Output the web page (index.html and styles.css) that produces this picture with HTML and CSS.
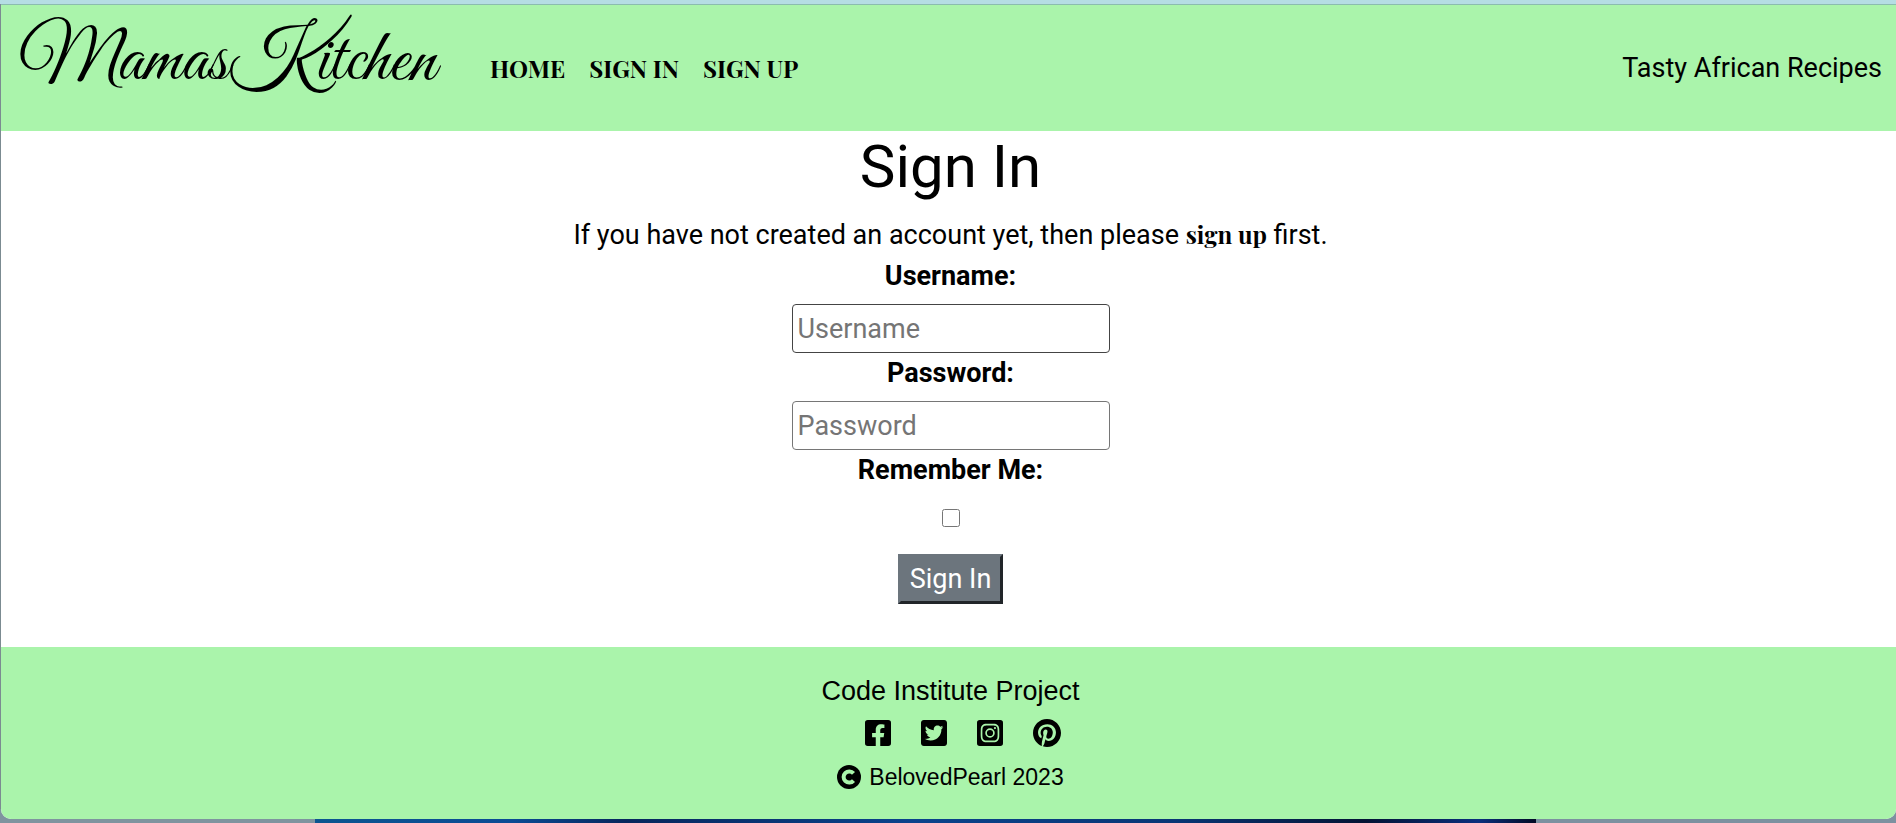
FILE: index.html
```html
<!DOCTYPE html>
<html lang="en">
<head>
<meta charset="utf-8">
<meta name="viewport" content="width=device-width, initial-scale=1">
<title>Mamas Kitchen - Sign In</title>
<link rel="stylesheet" href="styles.css">
</head>
<body>
<div class="window">
  <header class="header">
    <a class="logo" href="#">MamasKitchen</a>
    <nav class="nav">
      <a href="#">HOME</a>
      <a href="#">SIGN IN</a>
      <a href="#">SIGN UP</a>
    </nav>
    <p class="tagline">Tasty African Recipes</p>
  </header>
  <main class="main">
    <h1>Sign In</h1>
    <p class="intro">If you have not created an account yet, then please <a href="#">sign up</a> first.</p>
    <form class="form">
      <label for="username">Username:</label>
      <input class="field field-active" id="username" type="text" placeholder="Username">
      <label for="password">Password:</label>
      <input class="field" id="password" type="password" placeholder="Password">
      <label for="remember">Remember Me:</label>
      <input class="check" id="remember" type="checkbox">
      <button class="submit" type="button">Sign In</button>
    </form>
  </main>
  <footer class="footer">
    <p class="project">Code Institute Project</p>
    <div class="social">
      <a href="#" aria-label="Facebook"><svg class="square" viewBox="0 32 448 448"><path d="M400 32H48A48 48 0 0 0 0 80v352a48 48 0 0 0 48 48h137.250V327.690h-63V256h63v-54.640c0-62.150 37-96.480 93.670-96.480 27.140 0 55.520 4.840 55.520 4.840v61h-31.270c-30.810 0-40.420 19.120-40.420 38.730V256h68.780l-11 71.690h-57.780V480H400a48 48 0 0 0 48-48V80a48 48 0 0 0-48-48z"/></svg></a>
      <a href="#" aria-label="Twitter"><svg class="square" viewBox="0 32 448 448"><path d="M400 32H48C21.500 32 0 53.500 0 80v352c0 26.500 21.500 48 48 48h352c26.500 0 48-21.500 48-48V80c0-26.500-21.500-48-48-48zm-48.900 158.800c.2 2.800.2 5.700.2 8.500 0 86.700-66 186.600-186.600 186.600-37.200 0-71.700-10.800-100.700-29.400 5.300.6 10.400.8 15.800.8 30.700 0 58.900-10.400 81.400-28-28.800-.6-53-19.500-61.300-45.500 10.100 1.500 19.200 1.500 29.600-1.200-30-6.100-52.500-32.500-52.500-64.400v-.8c8.700 4.900 18.900 7.900 29.600 8.300a65.447 65.447 0 0 1-29.200-54.600c0-12.200 3.200-23.400 8.900-33.100 32.300 39.800 80.800 65.800 135.200 68.600-9.300-44.500 24-80.600 64-80.600 18.900 0 35.900 7.900 47.900 20.700 14.800-2.800 29-8.300 41.600-15.800-4.900 15.200-15.200 28-28.800 36.100 13.200-1.400 26-5.100 37.800-10.200-8.900 13.100-20.100 24.700-32.900 34z"/></svg></a>
      <a href="#" aria-label="Instagram"><svg class="square" viewBox="0 32 448 448"><path d="M224,202.660A53.340,53.340,0,1,0,277.360,256,53.380,53.380,0,0,0,224,202.660Zm124.710-41a54,54,0,0,0-30.410-30.410c-21-8.290-71-6.430-94.300-6.430s-73.250-1.930-94.310,6.430a54,54,0,0,0-30.410,30.410c-8.280,21-6.430,71.050-6.430,94.330S91,329.260,99.320,350.330a54,54,0,0,0,30.410,30.410c21,8.290,71,6.430,94.310,6.430s73.240,1.930,94.300-6.430a54,54,0,0,0,30.410-30.410c8.350-21,6.430-71.050,6.430-94.330S357.100,182.740,348.750,161.670ZM224,338a82,82,0,1,1,82-82A81.900,81.900,0,0,1,224,338Zm85.380-148.300a19.140,19.140,0,1,1,19.130-19.140A19.100,19.100,0,0,1,309.420,189.740ZM400,32H48A48,48,0,0,0,0,80V432a48,48,0,0,0,48,48H400a48,48,0,0,0,48-48V80A48,48,0,0,0,400,32ZM382.880,322c-1.290,25.630-7.140,48.340-25.850,67s-41.400,24.630-67,25.850c-26.410,1.490-105.590,1.490-132,0-25.630-1.290-48.260-7.150-67-25.850s-24.630-41.420-25.850-67c-1.490-26.420-1.490-105.610,0-132,1.290-25.630,7.070-48.340,25.850-67s41.470-24.560,67-25.780c26.410-1.490,105.590-1.490,132,0,25.630,1.290,48.330,7.150,67,25.850s24.630,41.420,25.850,67.050C384.370,216.440,384.370,295.560,382.880,322Z"/></svg></a>
      <a href="#" aria-label="Pinterest"><svg class="round" viewBox="0 8 496 496"><path d="M496 256c0 137-111 248-248 248-25.600 0-50.200-3.900-73.400-11.100 10.100-16.500 25.200-43.500 30.800-65 3-11.600 15.400-59 15.400-59 8.100 15.400 31.700 28.500 56.800 28.500 74.800 0 128.700-68.800 128.700-154.300 0-81.900-66.900-143.200-152.900-143.200-107 0-163.900 71.800-163.900 150.100 0 36.400 19.400 81.700 50.300 96.100 4.700 2.200 7.200 1.200 8.300-3.300.8-3.400 5-20.300 6.900-28.100.6-2.500.3-4.700-1.700-7.100-10.100-12.500-18.300-35.300-18.300-56.600 0-54.700 41.400-107.600 112-107.600 60.900 0 103.600 41.500 103.600 100.900 0 67.100-33.900 113.600-78 113.600-24.300 0-42.600-20.100-36.700-44.800 7-29.500 20.500-61.300 20.500-82.600 0-19-10.200-34.900-31.400-34.900-24.900 0-44.900 25.700-44.900 60.200 0 22 7.400 36.800 7.400 36.800s-24.500 103.800-29 123.200c-5 21.400-3 51.600-.9 71.200C65.400 450.900 0 361.100 0 256 0 119 111 8 248 8s248 111 248 248z"/></svg></a>
    </div>
    <p class="copyright"><svg class="mark" viewBox="0 0 24 24" aria-hidden="true"><circle cx="12" cy="12" r="12"/><path class="mark-arc" d="M16.500 8.400A5.600 5.600 0 1 0 16.500 15.600"/></svg>BelovedPearl 2023</p>
  </footer>
</div>
</body>
</html>
```
FILE: styles.css
```css
* { box-sizing: border-box; }

body {
  margin: 0;
  min-height: 100vh;
  display: flex;
  flex-direction: column;
  padding: 4px 0 4px 1px;
  color: #000;
  font: 27px/40px Roboto, "Liberation Sans", sans-serif;
  background:
    linear-gradient(#b5dde3, #b5dde3) top / 100% 4px no-repeat,
    linear-gradient(90deg, #7f949f 0 16.6%, #0b5590 16.6%, #0a4b94 27%, #06265c 33%, #0a438c 48%, #083675 62%, #031334 72%, #0a2f7d 78%, #020a24 81%, #7c91a0 81%) bottom / 100% 14px no-repeat,
    #7b8b91;
}

h1, p { margin: 0; font-weight: 400; }
a { color: inherit; text-decoration: none; }

.window {
  flex: 1;
  display: flex;
  flex-direction: column;
  overflow: hidden;
  border-top: 1px solid #8bbcae;
  border-radius: 0 0 10px 10px;
  background: #fff;
}

.header {
  display: flex;
  align-items: center;
  min-height: 126px;
  padding: 0 14px 0 18px;
  background: #aaf4ab;
}

.logo {
  width: 471px;
  padding-bottom: 10px;
  font: 74px/80px "Great Vibes", "Liberation Serif", cursive;
  font-kerning: none;
  white-space: nowrap;
}

.nav {
  display: flex;
  gap: 24px;
  font: bold 24px/32px "Playfair Display", "Liberation Serif", serif;
}

.tagline { margin-left: auto; }

.main {
  flex: 1;
  padding: 0 0 24px 4px;
  text-align: center;
}

h1 {
  padding: 0 0 12px;
  font-size: 60px;
  line-height: 72px;
}

.intro { padding-bottom: 1px; }
.intro a { font: bold 24px/32px "Playfair Display", "Liberation Serif", serif; }

.form {
  display: flex;
  flex-direction: column;
  align-items: center;
}

.form label {
  font-weight: 700;
  line-height: 40px;
  padding-bottom: 8px;
}

.field {
  width: 318px;
  height: 49px;
  padding: 0 5px;
  border: 1px solid #767676;
  border-radius: 4px;
  background: #fff;
  font: inherit;
}

.field-active { border-color: #444; }
.field::placeholder { color: #757575; opacity: 1; }

.check {
  width: 18px;
  height: 18px;
  margin: 11px 0 27px;
}

.submit {
  padding: 2px 9px;
  border: 3px solid;
  border-color: #6c757d #212529 #212529 #6c757d;
  background: #6c757d;
  color: #fff;
  font: inherit;
}

.footer {
  padding: 24px 0 22px 4px;
  background: #aaf4ab;
  font-family: "Liberation Sans", Arial, sans-serif;
  text-align: center;
}

.social {
  display: flex;
  justify-content: center;
  align-items: center;
  gap: 30px;
  height: 44px;
  padding-left: 24px;
}

.social a { display: flex; }
.square { width: 26px; height: 26px; }
.round { width: 28px; height: 28px; }

.copyright {
  display: flex;
  justify-content: center;
  align-items: center;
  gap: 8px;
  padding-top: 2px;
  font-size: 23px;
}

.mark { width: 24px; height: 24px; }
.mark-arc { fill: none; stroke: #aaf4ab; stroke-width: 4; }
```
